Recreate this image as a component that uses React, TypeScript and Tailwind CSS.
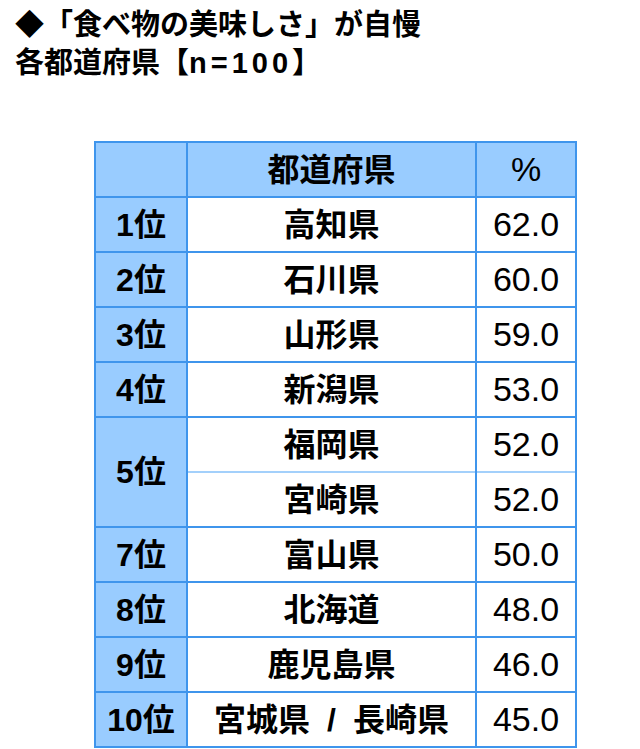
import React from "react";

const FONT = { fontFamily: '"Liberation Sans", "Noto Sans CJK JP", sans-serif' };

const rows: { rank: string; pref: React.ReactNode; pct: string }[] = [
  { rank: "1位", pref: "高知県", pct: "62.0" },
  { rank: "2位", pref: "石川県", pct: "60.0" },
  { rank: "3位", pref: "山形県", pct: "59.0" },
  { rank: "4位", pref: "新潟県", pct: "53.0" },
];
const rows2: { rank: string; pref: React.ReactNode; pct: string }[] = [
  { rank: "7位", pref: "富山県", pct: "50.0" },
  { rank: "8位", pref: "北海道", pct: "48.0" },
  { rank: "9位", pref: "鹿児島県", pct: "46.0" },
  {
    rank: "10位",
    pref: (
      <span>
        宮城県<span className="inline-block px-[17px]">/</span>長崎県
      </span>
    ),
    pct: "45.0",
  },
];

const rankCls = "bg-[#99ccff] h-[53px] flex items-center justify-center text-[32px] font-bold text-black";
const prefCls = "bg-white h-[53px] flex items-center justify-center text-[32px] font-bold text-black whitespace-nowrap";
const pctCls = "bg-white h-[53px] flex items-center justify-center text-[34px] font-normal text-black";

function Row({ rank, pref, pct }: { rank: string; pref: React.ReactNode; pct: string }) {
  return (
    <>
      <div className={rankCls}>{rank}</div>
      <div className={prefCls}>{pref}</div>
      <div className={pctCls}>{pct}</div>
    </>
  );
}

export default function App() {
  return (
    <div className="w-[640px] h-[749px] bg-white overflow-hidden" style={FONT}>
      <div className="pl-[15px] pt-[6px] text-[29px] leading-[38px] font-bold text-black whitespace-nowrap">
        <div>◆「食べ物の美味しさ」が自慢</div>
        <div>
          各都道府県【<span className="tracking-[4px]">n=100</span>】
        </div>
      </div>
      <div className="ml-[94px] mt-[59px] w-[483px] bg-[#3f95ec] p-[2px] grid grid-cols-[90px_287px_98px] gap-[2px]">
        <div className="bg-[#99ccff] h-[53px]" />
        <div className="bg-[#99ccff] h-[53px] flex items-center justify-center text-[32px] font-bold text-black">
          都道府県
        </div>
        <div className="bg-[#99ccff] h-[53px] flex items-center justify-center text-[34px] font-normal text-black">
          %
        </div>
        {rows.map((r) => (
          <Row key={r.rank} {...r} />
        ))}
        <div className="bg-[#99ccff] flex items-center justify-center text-[32px] font-bold text-black">
          5位
        </div>
        <div className="col-span-2 grid grid-cols-[287px_98px] gap-x-[2px] bg-[#3f95ec]">
          <div className={prefCls}>福岡県</div>
          <div className={pctCls}>52.0</div>
          <div className="bg-white h-[55px] border-t-2 border-[#a3d0fb] flex items-center justify-center text-[32px] font-bold text-black">
            宮崎県
          </div>
          <div className="bg-white h-[55px] border-t-2 border-[#a3d0fb] flex items-center justify-center text-[34px] font-normal text-black">
            52.0
          </div>
        </div>
        {rows2.map((r) => (
          <Row key={r.rank} {...r} />
        ))}
      </div>
    </div>
  );
}
